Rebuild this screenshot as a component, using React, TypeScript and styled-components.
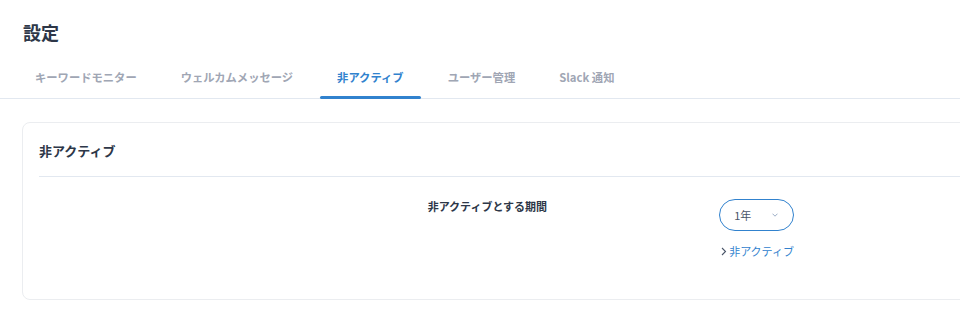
import styled, { createGlobalStyle } from 'styled-components'

const GlobalStyle = createGlobalStyle`
  html, body {
    margin: 0;
    padding: 0;
    background: #fff;
    overflow: hidden;
  }
  body {
    font-family: "Noto Sans CJK JP", "Noto Sans", sans-serif;
    color: #2d3748;
  }
`

const Page = styled.div`
  width: 960px;
  padding-top: 19px;
`

const Title = styled.h1`
  margin: 0 0 0 23px;
  font-size: 18px;
  line-height: 26px;
  font-weight: 700;
  color: #2d3748;
`

const TabBar = styled.nav`
  display: flex;
  gap: 10px;
  margin-top: 11px;
  padding-left: 18px;
  border-bottom: 1px solid #e2e8f0;
`

const Tab = styled.div<{ $active?: boolean }>`
  position: relative;
  padding: 12px 17px 12px;
  font-size: 11.3px;
  line-height: 18px;
  font-weight: 700;
  color: ${(p) => (p.$active ? '#3182ce' : '#a0a6b4')};
  cursor: pointer;
  white-space: nowrap;

  &::after {
    content: '';
    display: ${(p) => (p.$active ? 'block' : 'none')};
    position: absolute;
    left: 0;
    right: 0;
    bottom: -1px;
    height: 3px;
    border-radius: 2px;
    background: #3182ce;
  }
`

const Card = styled.section`
  width: 1200px;
  margin: 23px 0 0 22px;
  padding: 0 16px;
  border: 1px solid #ebedf0;
  border-radius: 8px;
  box-sizing: border-box;
`

const CardHeader = styled.h2`
  margin: 0;
  padding: 18px 0 15px;
  font-size: 13px;
  line-height: 20px;
  font-weight: 600;
  color: #2d3748;
  border-bottom: 1px solid #e2e8f0;
`

const FormRow = styled.div`
  display: grid;
  grid-template-columns: 4fr 3fr 5fr;
  padding: 22px 0 41px;
`

const Label = styled.div`
  grid-column: 2;
  font-size: 11px;
  line-height: 14px;
  font-weight: 700;
  color: #2d3748;
`

const Field = styled.div`
  grid-column: 3;
  display: flex;
  flex-direction: column;
  align-items: flex-start;
`

const Select = styled.div`
  display: flex;
  align-items: center;
  justify-content: space-between;
  width: 75px;
  height: 32px;
  padding: 0 15px 0 14px;
  box-sizing: border-box;
  border: 1px solid #3182ce;
  border-radius: 16px;
  font-size: 11px;
  color: #4a5568;
`

const Link = styled.a`
  display: flex;
  align-items: center;
  gap: 2px;
  margin: 13px 0 0 2px;
  font-size: 11px;
  line-height: 14px;
  color: #3182ce;
  text-decoration: none;
`

const tabs = ['キーワードモニター', 'ウェルカムメッセージ', '非アクティブ', 'ユーザー管理', 'Slack 通知']

export default function App() {
  return (
    <>
      <GlobalStyle />
      <Page>
        <Title>設定</Title>
        <TabBar>
          {tabs.map((t) => (
            <Tab key={t} $active={t === '非アクティブ'}>
              {t}
            </Tab>
          ))}
        </TabBar>
        <Card>
          <CardHeader>非アクティブ</CardHeader>
          <FormRow>
            <Label>非アクティブとする期間</Label>
            <Field>
              <Select>
                <span>1年</span>
                <svg width='6' height='4' viewBox='0 0 6 4' fill='none'>
                  <path d='M0.5 0.7 L3 3.2 L5.5 0.7' stroke='#90a4c0' strokeWidth='0.9' />
                </svg>
              </Select>
              <Link href='#'>
                <svg width='6' height='9' viewBox='0 0 6 9' fill='none'>
                  <path d='M1 1 L4.5 4.5 L1 8' stroke='#4a5568' strokeWidth='1.1' />
                </svg>
                非アクティブ
              </Link>
            </Field>
          </FormRow>
        </Card>
      </Page>
    </>
  )
}
